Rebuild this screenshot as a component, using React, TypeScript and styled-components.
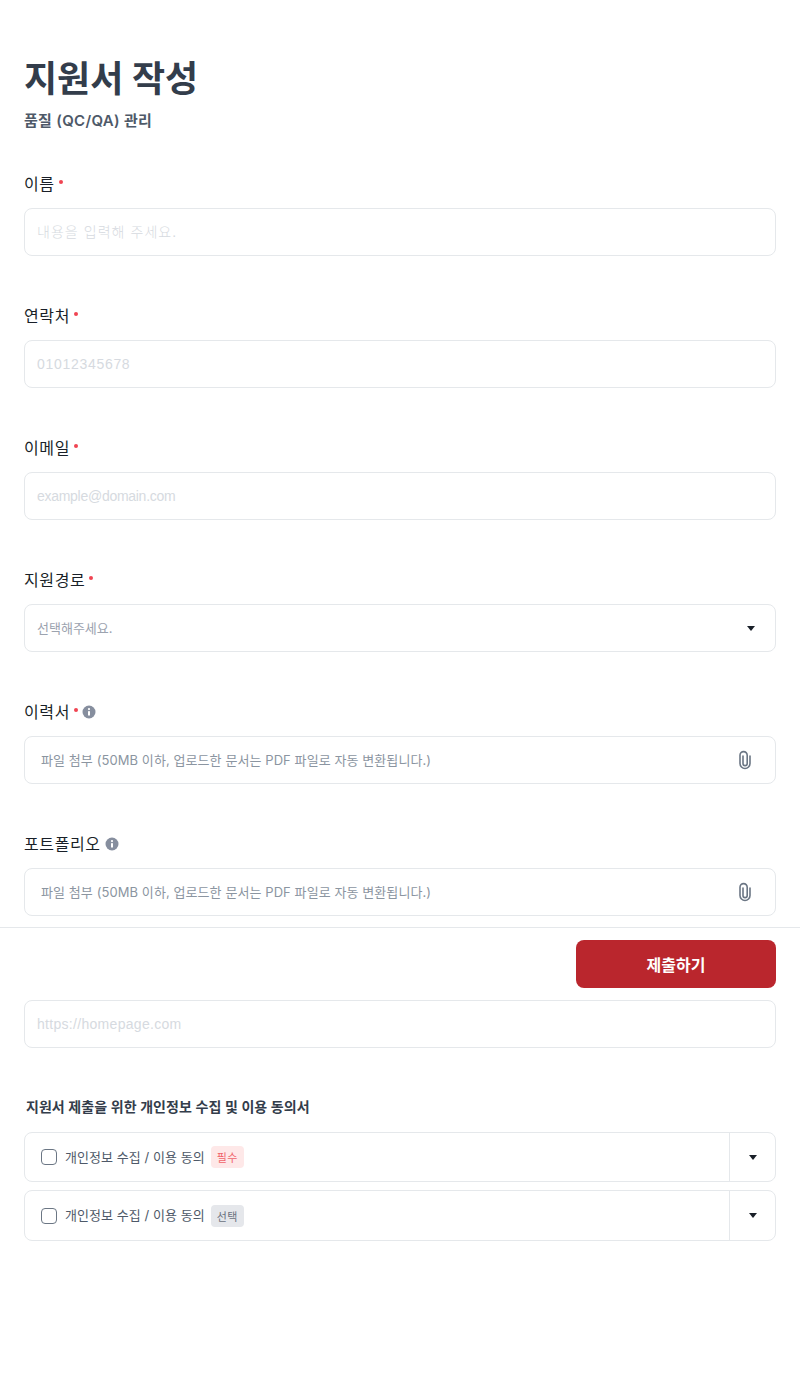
import React from 'react';
import styled, { createGlobalStyle } from 'styled-components';

const GlobalStyle = createGlobalStyle`
  html, body {
    margin: 0;
    padding: 0;
    background: #fff;
    font-family: Inter, "Noto Sans CJK KR", "Noto Sans", sans-serif;
  }
  * { box-sizing: border-box; }
`;

const Page = styled.div`
  position: relative;
  width: 800px;
  height: 1395px;
  padding: 54px 24px 0;
  overflow: hidden;
`;

const Title = styled.h1`
  margin: 0;
  font-size: 36px;
  line-height: 50px;
  font-weight: 700;
  color: #333d4b;
`;

const Subtitle = styled.p`
  margin: 5px 0 0;
  font-size: 15px;
  line-height: 23px;
  font-weight: 600;
  letter-spacing: 0.3px;
  color: #4e5968;
`;

const Form = styled.div`
  margin-top: 40px;
  display: flex;
  flex-direction: column;
  gap: 48px;
`;

const Field = styled.div`
  display: flex;
  flex-direction: column;
  gap: 12px;
`;

const Label = styled.div`
  display: flex;
  align-items: center;
  height: 24px;
  padding-bottom: 2px;
  font-size: 16px;
  font-weight: 400;
  letter-spacing: 0.6px;
  color: #191f28;
`;

const Required = styled.span`
  width: 4px;
  height: 4px;
  margin: -2px 0 0 4px;
  border-radius: 50%;
  background: #f04452;
`;

const InfoIcon = styled.svg`
  width: 14px;
  height: 14px;
  margin: 2px 0 0 4px;
  color: #868e9e;
`;

const Box = styled.div`
  display: flex;
  align-items: center;
  justify-content: space-between;
  height: 48px;
  padding: 0 12px;
  border: 1px solid #e5e8eb;
  border-radius: 8px;
  background: #fff;
`;

const Input = styled.input<{ $tracking: number }>`
  flex: 1;
  border: 0;
  outline: 0;
  padding: 0;
  font-family: "Liberation Sans", "Noto Sans CJK KR", sans-serif;
  font-size: 14px;
  font-weight: 300;
  letter-spacing: ${(p) => p.$tracking}px;
  color: #191f28;
  &::placeholder { color: #d6dae0; opacity: 1; }
`;

const SelectText = styled.span`
  padding-bottom: 2px;
  font-size: 13px;
  color: #9ca3af;
`;

const Caret = styled.span`
  width: 0;
  height: 0;
  border-left: 4.5px solid transparent;
  border-right: 4.5px solid transparent;
  border-top: 5px solid #191f28;
`;

const SelectCaret = styled(Caret)`
  margin-right: 8px;
`;

const FileBox = styled(Box)`
  padding: 0 20px 0 16px;
`;

const FileText = styled.span`
  padding-bottom: 2px;
  font-size: 13px;
  letter-spacing: 0.08px;
  color: #8b95a1;
`;

const ClipIcon = styled.svg`
  width: 20px;
  height: 20px;
  color: #6b7684;
`;

const Footer = styled.div`
  position: absolute;
  top: 927px;
  left: 0;
  right: 0;
  display: flex;
  justify-content: flex-end;
  padding: 12px 24px;
  border-top: 1px solid #e5e8eb;
  background: #fff;
`;

const SubmitButton = styled.button`
  width: 200px;
  height: 48px;
  border: 0;
  border-radius: 8px;
  background: #ba262d;
  color: #fff;
  font: inherit;
  font-size: 16px;
  font-weight: 600;
`;

const Agreement = styled.section`
  margin-top: 47px;
`;

const AgreementTitle = styled.h2`
  margin: 0 0 13px 2px;
  font-size: 14px;
  line-height: 24px;
  font-weight: 600;
  letter-spacing: 0.05px;
  color: #333d4b;
`;

const AgreementList = styled.div`
  display: flex;
  flex-direction: column;
  gap: 8px;
`;

const AgreementRow = styled.div<{ $height: number }>`
  display: flex;
  align-items: stretch;
  height: ${(p) => p.$height}px;
  border: 1px solid #e5e8eb;
  border-radius: 8px;
`;

const AgreementLabel = styled.div`
  flex: 1;
  display: flex;
  align-items: center;
  padding-left: 16px;
`;

const CheckBox = styled.span`
  width: 16px;
  height: 16px;
  margin-right: 8px;
  border: 1px solid #6b7684;
  border-radius: 4px;
`;

const AgreementText = styled.span`
  padding-bottom: 2px;
  font-size: 13px;
  letter-spacing: 0.05px;
  color: #4e5968;
`;

const Tag = styled.span<{ $required?: boolean }>`
  display: flex;
  align-items: center;
  height: 22px;
  margin-left: 6px;
  padding: 0 6px;
  border-radius: 4px;
  font-size: 11px;
  letter-spacing: 0.5px;
  background: ${(p) => (p.$required ? '#fee8e8' : '#e5e7eb')};
  color: ${(p) => (p.$required ? '#f0646a' : '#6b7280')};
`;

const CaretCell = styled.div`
  width: 46px;
  display: flex;
  align-items: center;
  justify-content: center;
  border-left: 1px solid #e5e8eb;
`;

const Info = () => (
  <InfoIcon viewBox="0 0 14 14">
    <circle cx="7" cy="7" r="6.5" fill="currentColor" />
    <rect x="6" y="6" width="2" height="4.6" rx="0.4" fill="#fff" />
    <circle cx="7" cy="4.1" r="1.1" fill="#fff" />
  </InfoIcon>
);

const Clip = () => (
  <ClipIcon viewBox="0 0 20 20" fill="none" stroke="currentColor" strokeWidth="1.6" strokeLinecap="round">
    <path d="M15 6v7.5a5 5 0 0 1-10 0V5.2a3.6 3.6 0 0 1 7.2 0v8.3a2.1 2.1 0 0 1-4.2 0V6" />
  </ClipIcon>
);

const App: React.FC = () => {
  return (
    <Page>
      <GlobalStyle />
      <Title>지원서 작성</Title>
      <Subtitle>품질 (QC/QA) 관리</Subtitle>
      <Form>
        <Field>
          <Label>이름<Required /></Label>
          <Box><Input $tracking={1.05} placeholder="내용을 입력해 주세요." /></Box>
        </Field>
        <Field>
          <Label>연락처<Required /></Label>
          <Box><Input $tracking={0.7} placeholder="01012345678" /></Box>
        </Field>
        <Field>
          <Label>이메일<Required /></Label>
          <Box><Input $tracking={-0.28} placeholder="example@domain.com" /></Box>
        </Field>
        <Field>
          <Label>지원경로<Required /></Label>
          <Box>
            <SelectText>선택해주세요.</SelectText>
            <SelectCaret />
          </Box>
        </Field>
        <Field>
          <Label>이력서<Required /><Info /></Label>
          <FileBox>
            <FileText>파일 첨부 (50MB 이하, 업로드한 문서는 PDF 파일로 자동 변환됩니다.)</FileText>
            <Clip />
          </FileBox>
        </Field>
        <Field>
          <Label>포트폴리오<Info /></Label>
          <FileBox>
            <FileText>파일 첨부 (50MB 이하, 업로드한 문서는 PDF 파일로 자동 변환됩니다.)</FileText>
            <Clip />
          </FileBox>
        </Field>
        <Field>
          <Label />
          <Box><Input $tracking={0.3} placeholder="https://homepage.com" /></Box>
        </Field>
      </Form>
      <Agreement>
        <AgreementTitle>지원서 제출을 위한 개인정보 수집 및 이용 동의서</AgreementTitle>
        <AgreementList>
          <AgreementRow $height={50}>
            <AgreementLabel>
              <CheckBox />
              <AgreementText>개인정보 수집 / 이용 동의</AgreementText>
              <Tag $required>필수</Tag>
            </AgreementLabel>
            <CaretCell><Caret /></CaretCell>
          </AgreementRow>
          <AgreementRow $height={51}>
            <AgreementLabel>
              <CheckBox />
              <AgreementText>개인정보 수집 / 이용 동의</AgreementText>
              <Tag>선택</Tag>
            </AgreementLabel>
            <CaretCell><Caret /></CaretCell>
          </AgreementRow>
        </AgreementList>
      </Agreement>
      <Footer>
        <SubmitButton>제출하기</SubmitButton>
      </Footer>
    </Page>
  );
};

export default App;
